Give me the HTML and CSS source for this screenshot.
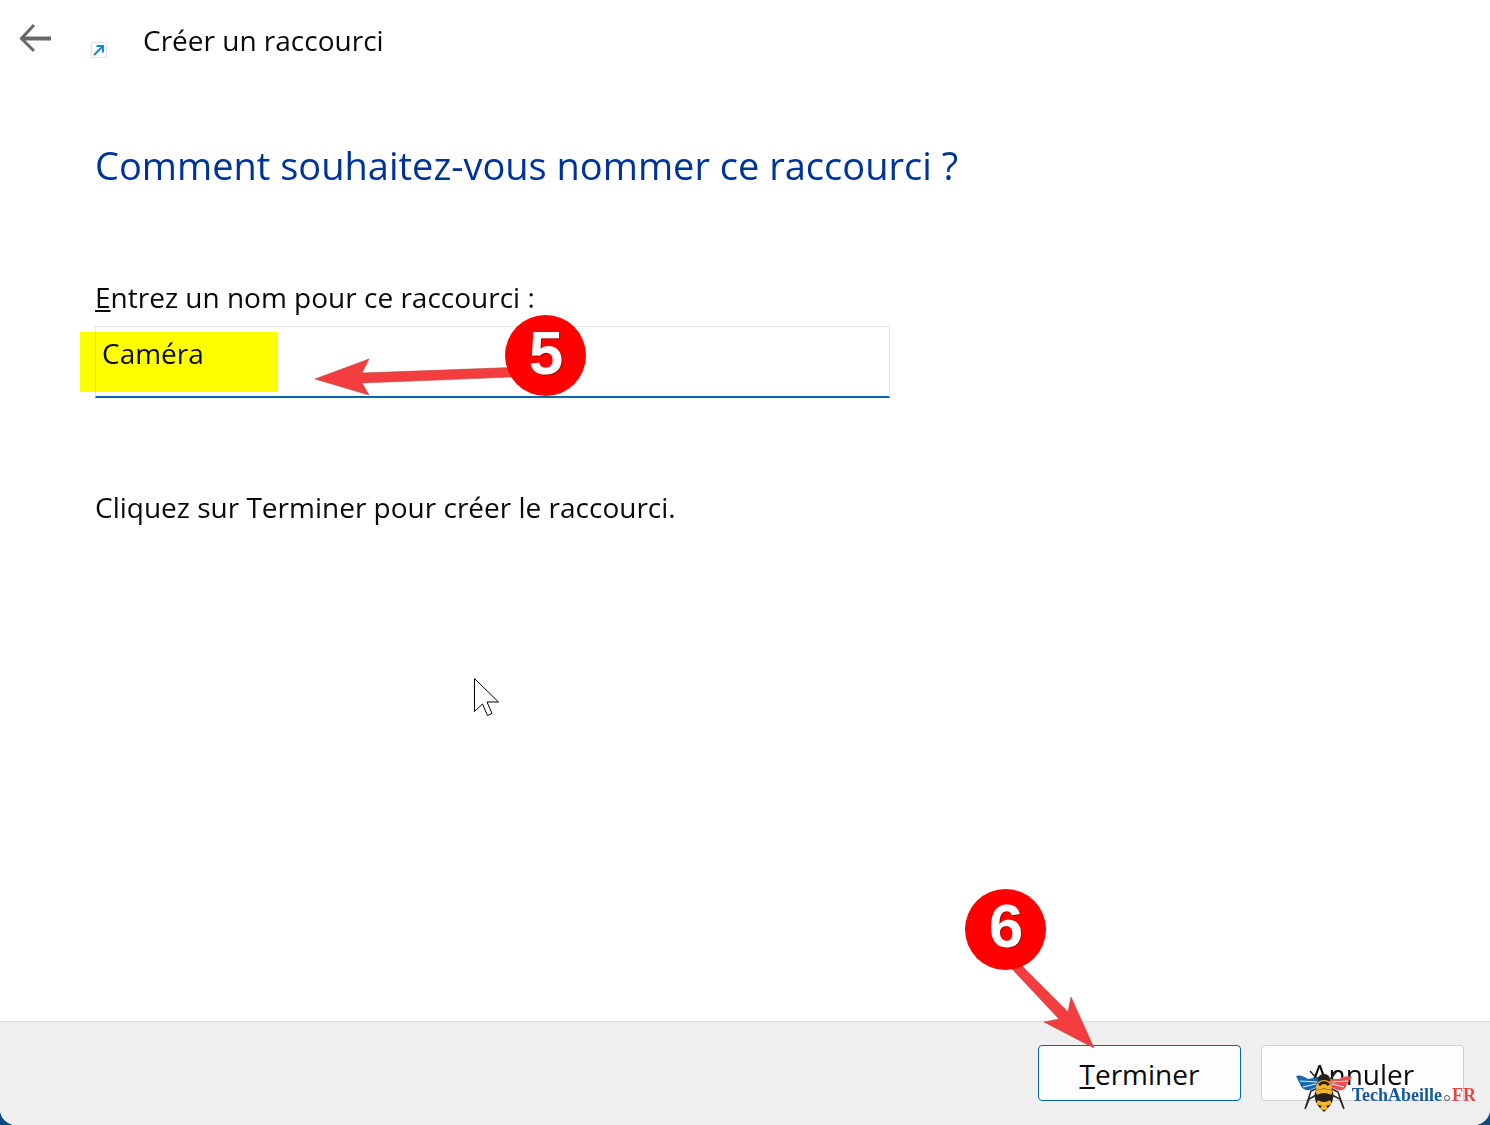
FILE: index.html
```html
<!DOCTYPE html>
<html lang="fr">
<head>
<meta charset="utf-8">
<meta name="viewport" content="width=device-width, initial-scale=1">
<title>Créer un raccourci</title>
<link rel="stylesheet" href="styles.css">
</head>
<body>
<form class="dialog">
  <header class="titlebar">
    <button class="back" type="button" aria-label="Retour">
      <svg width="34" height="30" viewBox="0 0 34 30" fill="none" stroke="#686868"><path d="M3 15.500H33" stroke-width="4"/><path d="M16 2L3.500 15.500L16 28" stroke-width="3"/></svg>
    </button>
    <svg class="shortcut" width="16" height="16" viewBox="0 0 16 16"><path d="M.5.5h15v15H.5z" fill="#fff" stroke="#e2e2e2"/><path d="M3 13L12 4M5.500 4h6.500v6.500" fill="none" stroke="#1b86d0" stroke-width="2"/></svg>
    <span class="title">Créer un raccourci</span>
  </header>
  <main class="content">
    <h1 class="heading">Comment souhaitez-vous nommer ce raccourci ?</h1>
    <label class="label" for="name"><u>E</u>ntrez un nom pour ce raccourci :</label>
    <div class="field">
      <input class="input" id="name" type="text" value="Caméra">
      <span class="highlight"></span>
      <svg class="callout callout-name" width="272" height="84" viewBox="0 0 272 84">
        <path d="M0 65L54 45L47 59L198 53.500V63L47 69L54 81Z" fill="#f33d3e" stroke="#b94747" stroke-width=".6"/>
        <circle cx="230.500" cy="41.500" r="40.500" fill="#fe0000"/>
        <text class="digit digit-shadow" x="232" y="61">5</text>
        <text class="digit" x="231" y="60">5</text>
      </svg>
    </div>
    <p class="hint">Cliquez sur Terminer pour créer le raccourci.</p>
    <svg class="cursor" width="28" height="42" viewBox="0 0 28 42"><path d="M2.500 2.500V35.500L10.500 28L15.500 39.500L20 37.500L15 26H26.500Z" fill="#fff" stroke="#000"/></svg>
  </main>
  <footer class="actions">
    <div class="finish">
      <button class="button button-default" type="button"><span><u>T</u>erminer</span></button>
      <svg class="callout callout-finish" width="132" height="162" viewBox="0 0 132 162">
        <path d="M48 81L57 77L104 124L107 109L130 160L80 134L95 131Z" fill="#f33d3e" stroke="#b94747" stroke-width=".6"/>
        <circle cx="41.500" cy="41.500" r="40.500" fill="#fe0000"/>
        <text class="digit digit-shadow" x="43" y="60">6</text>
        <text class="digit" x="42" y="59">6</text>
      </svg>
    </div>
    <button class="button" type="button">Annuler</button>
  </footer>
  <div class="watermark">
    <svg width="56" height="48" viewBox="0 0 56 48">
      <path d="M23 14L14 4M33 14L41 4M22 21L15 24L9 42M34 21L42 25L48 42M22 27L13 32L10 40M34 27L44 32L47 40" fill="none" stroke="#26221c" stroke-width="1.500"/>
      <path d="M0 9Q5 7 12 12L23 10V19L14 23Q6 24 4 17Q2 13 0 9Z" fill="#1666b0"/>
      <path d="M56 10Q48 8 43 12L33 12V19L41 23Q49 25 51 17Z" fill="#ec4d4c"/>
      <path d="M4 14L21 15M7 20L20 17M52 14L35 15M48 20L36 17" stroke="#eef3f7" stroke-width="1" fill="none"/>
      <ellipse cx="28" cy="12" rx="6" ry="5" fill="#25211b"/>
      <ellipse cx="28" cy="20" rx="8" ry="7" fill="#f4b52c"/>
      <path d="M19 24Q28 19 37 24Q40 35 28 45Q16 35 19 24Z" fill="#25211b"/>
      <path d="M20 26Q28 22 36 26M21 35Q28 39 35 35M25 40Q28 42 31 40" fill="none" stroke="#f4b52c" stroke-width="4"/>
      <path d="M23 18Q28 13 33 18" fill="none" stroke="#25211b" stroke-width="3"/>
    </svg>
    <span class="brand"><span>TechAbeille</span><i class="dot"></i><span class="tld">FR</span></span>
  </div>
</form>
</body>
</html>
```
FILE: styles.css
```css
* {
  box-sizing: border-box;
}

body {
  margin: 0;
  background: #0c4a82;
  color: #0a0a0a;
  font: 28px/40px "Open Sans", "Noto Sans", sans-serif;
}

.dialog {
  position: relative;
  display: flex;
  flex-direction: column;
  min-height: 100vh;
  background: #fff;
  border-radius: 0 0 16px 16px;
  overflow: hidden;
}

.titlebar {
  display: flex;
  align-items: center;
  padding: 20px 18px;
}

.back {
  display: flex;
  padding: 0;
  border: 0;
  background: none;
}

.back svg {
  margin-bottom: 4px;
}

.shortcut {
  margin: 20px 36px 0 39px;
}

.content {
  flex: 1;
  padding: 59px 95px 0;
}

.heading {
  margin: 0 0 86px;
  color: #003399;
  font-size: 38px;
  font-weight: 400;
  line-height: 52px;
}

u {
  text-decoration-thickness: 2px;
  text-underline-offset: 2px;
}

.label {
  display: block;
  margin-bottom: 9px;
}

.field {
  position: relative;
  max-width: 795px;
}

.input {
  display: block;
  width: 100%;
  height: 72px;
  padding: 0 6px 18px;
  border: 1px solid #e5e5e5;
  border-bottom: 2px solid #0067b8;
  border-radius: 0;
  outline: 0;
  background: #fff;
  color: inherit;
  font: inherit;
}

.highlight {
  position: absolute;
  top: 6px;
  left: -15px;
  width: 198px;
  height: 60px;
  background: #ff0;
  mix-blend-mode: multiply;
}

.callout {
  position: absolute;
  pointer-events: none;
}

.callout-name {
  top: -12px;
  left: 220px;
}

.callout-finish {
  top: -157px;
  left: -74px;
}

.digit {
  fill: #fff;
  font: bold 62px "Liberation Sans", sans-serif;
  text-anchor: middle;
}

.digit-shadow {
  fill: #b00000;
}

.hint {
  margin: 89px 0 0;
}

.cursor {
  position: absolute;
  top: 676px;
  left: 472px;
}

.actions {
  display: flex;
  justify-content: flex-end;
  gap: 20px;
  padding: 23px 26px 24px;
  border-top: 1px solid #d9d9d9;
  background: #efefef;
}

.finish {
  position: relative;
}

.button {
  width: 203px;
  height: 56px;
  padding: 2px 0 0;
  border: 1px solid #d0d0d0;
  border-radius: 4px;
  background: #fdfdfd;
  color: inherit;
  font: inherit;
}

.button-default {
  border-color: #0067a8;
}

.watermark {
  position: absolute;
  right: 14px;
  bottom: 10px;
  display: flex;
  align-items: center;
}

.brand {
  display: flex;
  align-items: baseline;
  padding-top: 8px;
  color: #15599f;
  font: bold 18px/24px "Liberation Serif", serif;
}

.dot {
  width: 6px;
  height: 6px;
  margin: 0 2px;
  border: 1px solid #555;
  border-radius: 50%;
}

.tld {
  color: #e8463f;
}
```
